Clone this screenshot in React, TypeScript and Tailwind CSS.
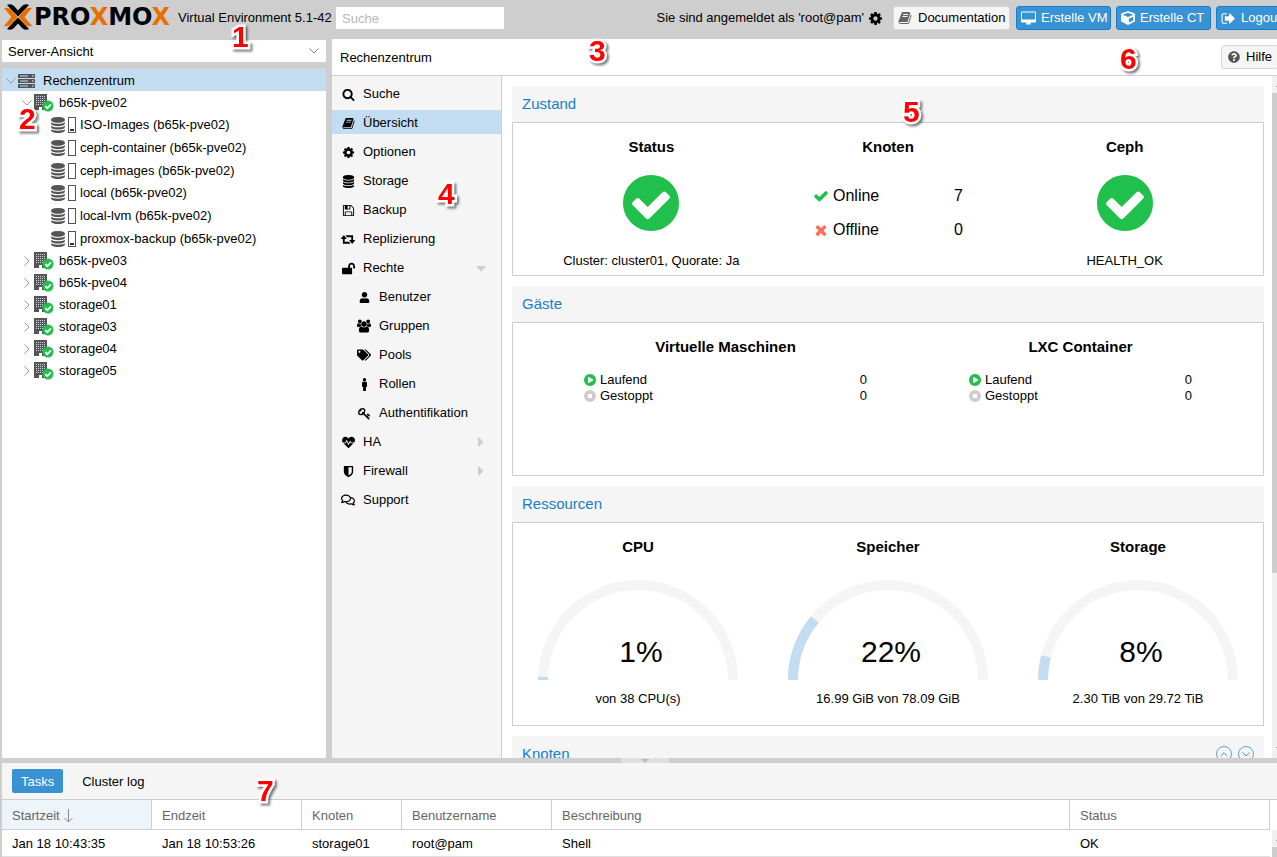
import type { ReactNode } from "react";
import {
  FaCaretDown,
  FaCaretRight,
  FaCube,
  FaHeartbeat,
  FaLockOpen,
  FaMale,
  FaQuestionCircle,
  FaRegComments,
  FaTags,
  FaUser,
} from "react-icons/fa";

const glyphs = {
  search:
    "M1216 832q0-185-131.5-316.5t-316.5-131.5-316.5 131.5-131.5 316.5 131.5 316.5 316.5 131.5 316.5-131.5 131.5-316.5zm512 832q0 52-38 90t-90 38q-54 0-90-38l-343-342q-179 124-399 124-143 0-273.5-55.5t-225-150-150-225-55.5-273.5 55.5-273.5 150-225 225-150 273.5-55.5 273.5 55.5 225 150 150 225 55.5 273.5q0 220-124 399l343 343q37 37 37 90z",
  book: "M1703 478q40 57 18 129l-275 906q-19 64-76.5 107.5t-122.5 43.5h-923q-77 0-148.5-53.5t-99.5-131.5q-24-67-2-127 0-4 3-27t4-37q1-8-3-21.5t-3-19.5q2-11 8-21t16.5-23.5 16.5-23.5q23-38 45-91.5t30-91.5q3-10 .5-30t-.5-28q3-11 17-28t17-23q21-36 42-92t25-90q1-9-2.5-32t.5-28q4-13 22-30.5t22-22.5q19-26 42.5-84.5t27.5-96.5q1-8-3-25.5t-2-26.5q2-8 9-18t18-23 17-21q8-12 16.5-30.5t15-35 16-36 19.5-32 26.5-23.5 36-11.5 47.5 5.5l-1 3q38-9 51-9h761q74 0 114 56t18 130l-274 906q-36 119-71.5 153.5t-128.5 34.5h-869q-27 0-38 15-11 16-1 43 24 70 144 70h923q29 0 56-15.5t35-41.5l300-987q7-22 5-57 38 15 59 43zm-1064 2q-4 13 2 22.5t20 9.5h608q13 0 25.5-9.5t16.5-22.5l21-64q4-13-2-22.5t-20-9.5h-608q-13 0-25.5 9.5t-16.5 22.5zm-83 256q-4 13 2 22.5t20 9.5h608q13 0 25.5-9.5t16.5-22.5l21-64q4-13-2-22.5t-20-9.5h-608q-13 0-25.5 9.5t-16.5 22.5z",
  cog: "M1152 896q0-106-75-181t-181-75-181 75-75 181 75 181 181 75 181-75 75-181zm512-109v222q0 12-8 23t-20 13l-185 28q-19 54-39 91 35 50 107 138 10 12 10 25t-9 23q-27 37-99 108t-94 71q-12 0-26-9l-138-108q-44 23-91 38-16 136-29 186-7 28-36 28h-222q-14 0-24.5-8.5t-11.5-21.5l-28-184q-49-16-90-37l-141 107q-10 9-25 9-14 0-25-11-126-114-165-168-7-10-7-23 0-12 8-23 15-21 51-66.5t54-70.5q-27-50-41-99l-183-27q-13-2-21-12.5t-8-23.5v-222q0-12 8-23t19-13l186-28q14-46 39-92-40-57-107-138-10-12-10-24 0-10 9-23 26-36 98.5-107.5t94.5-71.5q13 0 26 10l138 107q44-23 91-38 16-136 29-186 7-28 36-28h222q14 0 24.5 8.5t11.5 21.5l28 184q49 16 90 37l142-107q9-9 24-9 13 0 25 10 129 119 165 170 7 8 7 22 0 12-8 23-15 21-51 66.5t-54 70.5q26 50 41 98l183 28q13 2 21 12.5t8 23.5z",
  database:
    "M896 768q237 0 443-43t325-127v170q0 69-103 128t-280 93.5-385 34.5-385-34.5-280-93.5-103-128v-170q119 84 325 127t443 43zm0 768q237 0 443-43t325-127v170q0 69-103 128t-280 93.5-385 34.5-385-34.5-280-93.5-103-128v-170q119 84 325 127t443 43zm0-384q237 0 443-43t325-127v170q0 69-103 128t-280 93.5-385 34.5-385-34.5-280-93.5-103-128v-170q119 84 325 127t443 43zm0-1152q208 0 385 34.5t280 93.5 103 128v128q0 69-103 128t-280 93.5-385 34.5-385-34.5-280-93.5-103-128v-128q0-69 103-128t280-93.5 385-34.5z",
  floppy:
    "M512 1536h768v-384h-768v384zm896 0h128v-896q0-14-10-38.5t-20-34.5l-281-281q-10-10-34-20t-39-10v416q0 40-28 68t-68 28h-576q-40 0-68-28t-28-68v-416h-128v1280h128v-416q0-40 28-68t68-28h832q40 0 68 28t28 68v416zm-384-928v-320q0-13-9.5-22.5t-22.5-9.5h-192q-13 0-22.5 9.5t-9.5 22.5v320q0 13 9.5 22.5t22.5 9.5h192q13 0 22.5-9.5t9.5-22.5zm640 32v928q0 40-28 68t-68 28h-1344q-40 0-68-28t-28-68v-1344q0-40 28-68t68-28h928q40 0 88 20t76 48l280 280q28 28 48 76t20 88z",
  retweet:
    "M1280 1632q0 13-9.5 22.5t-22.5 9.5h-960q-8 0-13.5-2t-9-7-5.5-8-3-11.5-1-11.5v-600h-192q-26 0-45-19t-19-45q0-24 15-41l320-384q19-22 49-22t49 22l320 384q15 17 15 41 0 26-19 45t-45 19h-192v384h576q16 0 25 11l160 192q7 10 7 21zm640-416q0 24-15 41l-320 384q-20 23-49 23t-49-23l-320-384q-15-17-15-41 0-26 19-45t45-19h192v-384h-576q-16 0-25-12l-160-192q-7-9-7-20 0-13 9.5-22.5t22.5-9.5h960q8 0 13.5 2t9 7 5.5 8 3 11.5 1 11.5v600h192q26 0 45 19t19 45z",
  users:
    "M529 896q-162 5-265 128h-134q-82 0-138-40.5t-56-118.5q0-353 124-353 6 0 43.5 21t97.5 42.5 119 21.5q67 0 133-23-5 37-5 66 0 139 81 256zm1071 637q0 120-73 189.5t-194 69.5h-874q-121 0-194-69.5t-73-189.5q0-53 3.5-103.5t14-109 26.5-108.5 43-97.5 62-81 85.5-53.5 111.5-20q10 0 43 21.5t73 48 107 48 135 21.5 135-21.5 107-48 73-48 43-21.5q61 0 111.5 20t85.5 53.5 62 81 43 97.5 26.5 108.5 14 109 3.5 103.5zm-1024-1277q0 106-75 181t-181 75-181-75-75-181 75-181 181-75 181 75 75 181zm704 384q0 159-112.5 271.5t-271.5 112.5-271.5-112.5-112.5-271.5 112.5-271.5 271.5-112.5 271.5 112.5 112.5 271.5zm576 225q0 78-56 118.5t-138 40.5h-134q-103-123-265-128 81-117 81-256 0-29-5-66 66 23 133 23 59 0 119-21.5t97.5-42.5 43.5-21q124 0 124 353zm-128-609q0 106-75 181t-181 75-181-75-75-181 75-181 181-75 181 75 75 181z",
  key: "M832 512q0-80-56-136t-136-56-136 56-56 136q0 42 19 83-41-19-83-19-80 0-136 56t-56 136 56 136 136 56 136-56 56-136q0-42-19-83 41 19 83 19 80 0 136-56t56-136zm851 704q0 17-49 66t-66 49q-9 0-28.5-16t-36.5-33-38.5-40-24.5-26l-96 96 220 220q28 28 28 68 0 42-39 81t-81 39q-40 0-68-28l-671-671q-176 131-365 131-163 0-265.5-102.5t-102.5-265.5q0-160 95-313t248-248 313-95q163 0 265.5 102.5t102.5 265.5q0 189-131 365l355 355 96-96q-3-3-26-24.5t-40-38.5-33-36.5-16-28.5q0-17 49-66t66-49q13 0 23 10 6 6 46 44.5t82 79.5 86.5 86 73 78 28.5 41z",
  shield:
    "M1344 960v-640h-448v1137q119-63 213-137 235-184 235-360zm192-768v768q0 86-33.5 170.5t-83 150-118 127.5-126.5 103-121 77.5-89.5 49.5-42.5 20q-12 6-26 6t-26-6q-16-7-42.5-20t-89.5-49.5-121-77.5-126.5-103-118-127.5-83-150-33.5-170.5v-768q0-26 19-45t45-19h1152q26 0 45 19t19 45z",
  desktop:
    "M1728 992v-832q0-13-9.5-22.5t-22.5-9.5h-1600q-13 0-22.5 9.5t-9.5 22.5v832q0 13 9.5 22.5t22.5 9.5h1600q13 0 22.5-9.5t9.5-22.5zm128-832v1088q0 66-47 113t-113 47h-544q0 37 16 77.5t32 71 16 43.5q0 26-19 45t-45 19h-512q-26 0-45-19t-19-45q0-14 16-44t32-70 16-78h-544q-66 0-113-47t-47-113v-1088q0-66 47-113t113-47h1600q66 0 113 47t47 113z",
  signOut:
    "M704 1440q0 4 1 20t.5 26.5-3 23.5-10 19.5-20.5 6.5h-320q-119 0-203.5-84.5t-84.5-203.5v-704q0-119 84.5-203.5t203.5-84.5h320q13 0 22.5 9.5t9.5 22.5q0 4 1 20t.5 26.5-3 23.5-10 19.5-20.5 6.5h-320q-66 0-113 47t-47 113v704q0 66 47 113t113 47h312l11.5 1 11.5 3 8 5.5 7 9 2 13.5zm928-544q0 26-19 45l-544 544q-19 19-45 19t-45-19-19-45v-288h-448q-26 0-45-19t-19-45v-384q0-26 19-45t45-19h448v-288q0-26 19-45t45-19 45 19l544 544q19 19 19 45z",
  checkCircle:
    "M1412 734q0-28-18-46l-91-90q-19-19-45-19t-45 19l-408 407-226-226q-19-19-45-19t-45 19l-91 90q-18 18-18 46 0 27 18 45l362 362q19 19 45 19 27 0 46-19l543-543q18-18 18-45zm252 162q0 209-103 385.5t-279.5 279.5-385.5 103-385.5-103-279.5-279.5-103-385.5 103-385.5 279.5-279.5 385.5-103 385.5 103 279.5 279.5 103 385.5z",
  check:
    "M1671 566q0 40-28 68l-724 724-136 136q-28 28-68 28t-68-28l-136-136-362-362q-28-28-28-68t28-68l136-136q28-28 68-28t68 28l294 295 656-657q28-28 68-28t68 28l136 136q28 28 28 68z",
  times:
    "M1490 1322q0 40-28 68l-136 136q-28 28-68 28t-68-28l-294-294-294 294q-28 28-68 28t-68-28l-136-136q-28-28-28-68t28-68l294-294-294-294q-28-28-28-68t28-68l136-136q28-28 68-28t68 28l294 294 294-294q28-28 68-28t68 28l136 136q28 28 28 68t-28 68l-294 294 294 294q28 28 28 68z",
  playCircle:
    "M896 128q209 0 385.5 103t279.5 279.5 103 385.5-103 385.5-279.5 279.5-385.5 103-385.5-103-279.5-279.5-103-385.5 103-385.5 279.5-279.5 385.5-103zm384 823q32-18 32-55t-32-55l-544-320q-31-19-64-1-32 19-32 56v640q0 37 32 56 16 8 32 8 17 0 32-9z",
};

function Glyph({
  name,
  className,
  viewBox = "0 0 1792 1792",
}: {
  name: keyof typeof glyphs;
  className?: string;
  viewBox?: string;
}) {
  return (
    <svg viewBox={viewBox} fill="currentColor" className={`shrink-0 ${className ?? ""}`} aria-hidden="true">
      <path d={glyphs[name]} />
    </svg>
  );
}

function Chevron({ className }: { className?: string }) {
  return (
    <svg viewBox="0 0 10 6" fill="none" stroke="currentColor" className={`shrink-0 ${className ?? ""}`} aria-hidden="true">
      <path d="M.5.5 5 5 9.5.5" />
    </svg>
  );
}

function ServerIcon() {
  return (
    <svg viewBox="0 0 17 14" className="h-[14px] w-[17px] shrink-0" aria-hidden="true">
      {[0, 5, 10].map((y) => (
        <g key={y}>
          <rect x="0" y={y} width="17" height="4" rx=".5" fill="#555" />
          <rect x="2" y={y + 1.5} width="8" height="1" fill="#c2ddf2" />
          <rect x="14" y={y + 1.5} width="1.5" height="1" fill="#fff" />
        </g>
      ))}
    </svg>
  );
}

function BuildingIcon() {
  return (
    <svg viewBox="0 0 20 18" className="h-[18px] w-5 shrink-0" aria-hidden="true">
      <path d="M0 0h13v16H0z" fill="#555" />
      {[2, 4, 6, 8, 10].map((y) =>
        [2, 4, 6, 8, 10].map((x) => <rect key={`${x}-${y}`} x={x} y={y} width="1" height="1" fill="#cfd6de" />),
      )}
      <path d="M5 13h3v3H5z" fill="#fff" />
      <circle cx="14" cy="12" r="5.5" fill="#21bf4b" />
      <path d="m11.3 12.2 2 2 3.6-3.8" fill="none" stroke="#fff" strokeWidth="1.7" />
    </svg>
  );
}

function Logo() {
  return (
    <div className="flex w-[170px] shrink-0 items-center gap-[2px]">
      <svg viewBox="0 0 28 26" className="h-[26px] w-7 shrink-0" aria-hidden="true">
        <path d="M3 1q4-2 7 1l4 4.500 4-4.500q3-3 7-1L14 12.500zM3 25q4 2 7-1l4-4.500 4 4.500q3 3 7 1L14 13.500z" fill="#000" />
        <path d="M0 4q5-1 7 1.500l6.500 7.500L7 20.500Q5 23 0 22l7.500-9zM28 4q-5-1-7 1.500L14.500 13l6.500 7.500q2 2.500 7 1.500l-7.500-9z" fill="#e57000" />
      </svg>
      <span className="font-['DejaVu_Sans',sans-serif] text-[24px] leading-7 font-bold text-black">
        PRO<span className="text-[#e57000]">X</span>MO<span className="text-[#e57000]">X</span>
      </span>
    </div>
  );
}

const storages = [
  { name: "ISO-Images (b65k-pve02)", used: true },
  { name: "ceph-container (b65k-pve02)", used: false },
  { name: "ceph-images (b65k-pve02)", used: false },
  { name: "local (b65k-pve02)", used: false },
  { name: "local-lvm (b65k-pve02)", used: false },
  { name: "proxmox-backup (b65k-pve02)", used: true },
];

const nodes = ["b65k-pve03", "b65k-pve04", "storage01", "storage03", "storage04", "storage05"];

const navItems: { label: string; icon: ReactNode; sub?: boolean; active?: boolean; arrow?: "down" | "right" }[] = [
  { label: "Suche", icon: <Glyph name="search" className="size-[13px]" /> },
  { label: "Übersicht", icon: <Glyph name="book" className="size-[13px]" />, active: true },
  { label: "Optionen", icon: <Glyph name="cog" className="size-[13px]" /> },
  { label: "Storage", icon: <Glyph name="database" className="size-[13px]" /> },
  { label: "Backup", icon: <Glyph name="floppy" className="size-[13px]" /> },
  { label: "Replizierung", icon: <Glyph name="retweet" viewBox="0 128 1920 1792" className="size-[14px]" /> },
  { label: "Rechte", icon: <FaLockOpen className="size-[13px]" />, arrow: "down" },
  { label: "Benutzer", icon: <FaUser className="size-[11px]" />, sub: true },
  { label: "Gruppen", icon: <Glyph name="users" viewBox="-64 0 1920 1792" className="size-[14px]" />, sub: true },
  { label: "Pools", icon: <FaTags className="size-[14px]" />, sub: true },
  { label: "Rollen", icon: <FaMale className="size-[13px]" />, sub: true },
  { label: "Authentifikation", icon: <Glyph name="key" className="size-[13px]" />, sub: true },
  { label: "HA", icon: <FaHeartbeat className="size-[13px]" />, arrow: "right" },
  { label: "Firewall", icon: <Glyph name="shield" className="size-[13px]" />, arrow: "right" },
  { label: "Support", icon: <FaRegComments className="size-[14px]" /> },
];

const gauges = [
  { title: "CPU", value: 1, detail: "von 38 CPU(s)" },
  { title: "Speicher", value: 22, detail: "16.99 GiB von 78.09 GiB" },
  { title: "Storage", value: 8, detail: "2.30 TiB von 29.72 TiB" },
];

function Header() {
  const primary =
    "flex h-6 shrink-0 items-center gap-[5px] rounded-[3px] border border-[#157fcc] bg-[#3892d4] pl-1 text-white";
  return (
    <header className="flex h-[39px] items-start pt-[6px] pr-[5px] pl-1 whitespace-nowrap">
      <div className="-mt-[3px] flex">
        <Logo />
      </div>
      <span className="ml-1 w-[158px] shrink-0 leading-6">Virtual Environment 5.1-42</span>
      <input
        aria-label="Suche"
        placeholder="Suche"
        className="mt-px h-[22px] w-[168px] shrink-0 bg-white px-[6px] outline-none placeholder:text-[#b8b8b8]"
      />
      <div className="ml-auto flex shrink-0 items-center">
        <span>Sie sind angemeldet als 'root@pam'</span>
        <button aria-label="Einstellungen" className="mr-[10px] ml-1">
          <Glyph name="cog" className="size-[15px]" />
        </button>
        <button className="mr-[6px] flex h-6 w-[117px] items-center gap-[6px] rounded-[3px] border border-[#d8d8d8] bg-[#f5f5f5] pl-1">
          <Glyph name="book" className="size-[14px] text-[#666]" />
          Documentation
        </button>
        <div className="flex gap-[5px]">
          <button className={`${primary} w-[95px]`}>
            <Glyph name="desktop" viewBox="-64 0 1920 1792" className="size-[15px]" />
            Erstelle VM
          </button>
          <button className={`${primary} w-[95px]`}>
            <FaCube className="size-[14px]" />
            Erstelle CT
          </button>
          <button className={`${primary} w-[68px]`}>
            <Glyph name="signOut" className="size-[15px]" />
            Logout
          </button>
        </div>
      </div>
    </header>
  );
}

function ResourceTree() {
  return (
    <aside className="flex w-[324px] shrink-0 flex-col gap-[7px] pt-px">
      <div className="relative">
        <select aria-label="Ansicht" className="h-[22px] w-full appearance-none bg-white pt-[2px] pl-[6px] outline-none">
          <option>Server-Ansicht</option>
        </select>
        <Chevron className="pointer-events-none absolute top-2 right-[7px] h-[6px] w-[10px] text-[#888]" />
      </div>
      <div className="flex-1 bg-white">
        <div className="flex h-[22px] items-center bg-[#c2ddf2] pt-[2px] pl-1">
          <Chevron className="mr-[2px] h-[6px] w-[10px] text-[#999]" />
          <ServerIcon />
          <span className="ml-2">Rechenzentrum</span>
        </div>
        <div className="flex h-[22px] items-center pt-[2px] pl-[20px]">
          <Chevron className="mr-[2px] h-[6px] w-[10px] text-[#999]" />
          <BuildingIcon />
          <span className="ml-[5px]">b65k-pve02</span>
        </div>
        <ul className="grid h-[136px] auto-rows-fr">
          {storages.map((storage) => (
            <li key={storage.name} className="flex items-center pt-[2px] pl-[46px]">
              <Glyph name="database" className="size-5 px-px py-[2px] text-[#555]" />
              <span className="flex h-4 w-2 items-end border border-[#555] p-px">
                {storage.used && <span className="h-[2px] w-full bg-[#333]" />}
              </span>
              <span className="ml-1">{storage.name}</span>
            </li>
          ))}
        </ul>
        <ul>
          {nodes.map((node) => (
            <li key={node} className="flex h-[22px] items-center pt-[2px] pl-[20px]">
              <Chevron className="mr-[2px] h-[6px] w-[10px] -rotate-90 text-[#999]" />
              <BuildingIcon />
              <span className="ml-[5px]">{node}</span>
            </li>
          ))}
        </ul>
      </div>
    </aside>
  );
}

function SideNav() {
  return (
    <nav className="flex w-[170px] shrink-0 flex-col gap-[5px] border-r border-[#cecece] bg-[#f5f5f5] pt-[5px]">
      {navItems.map((item) => (
        <a
          key={item.label}
          href="#"
          className={`flex h-6 items-center pt-[2px] pr-3 ${item.sub ? "pl-6" : "pl-2"} ${item.active ? "bg-[#c2ddf2]" : ""}`}
        >
          <span className="mr-[7px] flex w-4 justify-center">{item.icon}</span>
          {item.label}
          {item.arrow === "down" && <FaCaretDown className="ml-auto size-4 text-[#cecece]" />}
          {item.arrow === "right" && <FaCaretRight className="ml-auto size-4 text-[#cecece]" />}
        </a>
      ))}
    </nav>
  );
}

function Panel({ title, children }: { title: string; children: ReactNode }) {
  return (
    <section>
      <h2 className="flex h-9 items-center bg-[#f5f5f5] px-[10px] text-[15px] text-[#157fcc]">{title}</h2>
      <div className="border border-[#cecece] bg-white pt-[14px]">{children}</div>
    </section>
  );
}

function Title({ children }: { children: ReactNode }) {
  return <h3 className="text-center text-[15px] leading-5 font-bold">{children}</h3>;
}

function StatusColumn({ title, text }: { title: string; text: string }) {
  return (
    <div className="flex flex-col items-center">
      <Title>{title}</Title>
      <Glyph name="checkCircle" viewBox="128 128 1536 1536" className="mt-[18px] size-14 text-[#21bf4b]" />
      <p className="mt-[22px] leading-4">{text}</p>
    </div>
  );
}

function GuestColumn({ title }: { title: string }) {
  return (
    <div className="px-[51px]">
      <Title>{title}</Title>
      <ul className="mt-[15px] leading-4">
        <li className="flex items-center">
          <Glyph name="playCircle" viewBox="128 128 1536 1536" className="mr-1 size-3 text-[#21bf4b]" />
          Laufend<span className="ml-auto">0</span>
        </li>
        <li className="flex items-center">
          <svg viewBox="0 0 12 12" className="mr-1 size-3" aria-hidden="true">
            <circle cx="6" cy="6" r="6" fill="#cecece" />
            <rect x="4" y="4" width="4" height="4" fill="#fff" />
          </svg>
          Gestoppt<span className="ml-auto">0</span>
        </li>
      </ul>
    </div>
  );
}

function Gauge({ value }: { value: number }) {
  const angle = Math.PI * (1 - value / 100);
  const x = 100 + 95 * Math.cos(angle);
  const y = 100 - 95 * Math.sin(angle);
  return (
    <div className="relative mt-[23px] h-[100px] w-[200px]">
      <svg viewBox="0 0 200 100" className="h-full w-full" fill="none" strokeWidth="10" aria-hidden="true">
        <path d="M5 100A95 95 0 0 1 195 100" stroke="#f5f5f5" />
        <path d={`M5 100A95 95 0 0 1 ${x} ${y}`} stroke="#c2ddf2" />
      </svg>
      <span className="absolute inset-x-0 bottom-3 pl-[6px] text-center text-[30px] leading-8">{value}%</span>
    </div>
  );
}

function Overview() {
  return (
    <div className="flex min-w-0 flex-1 flex-col gap-[10px] overflow-hidden bg-white pt-[10px] pr-2 pl-[10px]">
      <Panel title="Zustand">
        <div className="grid grid-cols-3 px-5 pb-[6px]">
          <StatusColumn title="Status" text="Cluster: cluster01, Quorate: Ja" />
          <div className="flex flex-col items-center">
            <Title>Knoten</Title>
            <ul className="mt-[22px] w-[150px] text-base">
              <li className="flex h-[34px] items-center">
                <Glyph name="check" className="mr-1 size-4 text-[#21bf4b]" />
                Online<span className="ml-auto">7</span>
              </li>
              <li className="flex h-[34px] items-center">
                <Glyph name="times" className="mr-1 size-4 text-[#ff6c59]" />
                Offline<span className="ml-auto">0</span>
              </li>
            </ul>
          </div>
          <StatusColumn title="Ceph" text="HEALTH_OK" />
        </div>
      </Panel>
      <Panel title="Gäste">
        <div className="grid grid-cols-[385fr_325fr] px-5 pb-[71px]">
          <GuestColumn title="Virtuelle Maschinen" />
          <GuestColumn title="LXC Container" />
        </div>
      </Panel>
      <Panel title="Ressourcen">
        <div className="grid grid-cols-3 pb-[18px]">
          {gauges.map((gauge) => (
            <div key={gauge.title} className="flex flex-col items-center">
              <Title>{gauge.title}</Title>
              <Gauge value={gauge.value} />
              <p className="mt-[11px] leading-4">{gauge.detail}</p>
            </div>
          ))}
        </div>
      </Panel>
      <section className="flex h-9 shrink-0 items-center gap-[6px] bg-[#f5f5f5] px-[10px] text-[#157fcc]">
        <h2 className="mr-auto text-[15px]">Knoten</h2>
        <button aria-label="Nach oben" className="flex size-4 items-center justify-center rounded-full border border-[#5ba4d9]">
          <Chevron className="w-2 rotate-180" />
        </button>
        <button aria-label="Nach unten" className="flex size-4 items-center justify-center rounded-full border border-[#5ba4d9]">
          <Chevron className="w-2" />
        </button>
      </section>
    </div>
  );
}

function Scrollbar() {
  return (
    <div className="flex w-[17px] shrink-0 flex-col bg-[#f0f0f0]" aria-hidden="true">
      <div className="flex h-[17px] items-center justify-center text-[#505050]">
        <Chevron className="w-[9px] rotate-180" />
      </div>
      <div className="flex-1">
        <div className="h-[74%] bg-[#cdcdcd]" />
      </div>
      <div className="flex h-[17px] items-center justify-center text-[#505050]">
        <Chevron className="w-[9px]" />
      </div>
    </div>
  );
}

function TaskLog() {
  const th = "border-r border-b border-[#cecece] px-[10px] pt-[2px] text-left font-normal text-[#666]";
  const td = "border-b border-[#e0e0e0] px-[10px] pt-[2px]";
  return (
    <section className="ml-px border-l border-[#cecece] bg-[#f5f5f5]">
      <div role="tablist" className="flex h-9 items-center gap-[10px] px-[10px]">
        <button role="tab" aria-selected="true" className="h-6 rounded-[2px] bg-[#3892d4] px-[9px] pt-px text-white">
          Tasks
        </button>
        <button role="tab" aria-selected="false" className="h-6 px-[9px] pt-px">
          Cluster log
        </button>
      </div>
      <div className="flex border-t border-[#cecece] bg-white">
        <table className="min-w-0 flex-1 table-fixed border-separate border-spacing-0">
          <thead>
            <tr className="h-[30px]">
              <th className={`${th} w-[150px] bg-[#edf5fb]`}>
                <span className="flex items-center gap-1">
                  Startzeit
                  <svg viewBox="0 0 9 14" fill="none" stroke="#888" className="h-[14px] w-[9px]" aria-hidden="true">
                    <path d="M4.500 0v13M.5 9l4 4 4-4" />
                  </svg>
                </span>
              </th>
              <th className={`${th} w-[150px]`}>Endzeit</th>
              <th className={`${th} w-[100px]`}>Knoten</th>
              <th className={`${th} w-[150px]`}>Benutzername</th>
              <th className={th}>Beschreibung</th>
              <th className={`${th} w-[200px]`}>Status</th>
            </tr>
          </thead>
          <tbody>
            <tr className="h-[27px]">
              <td className={td}>Jan 18 10:43:35</td>
              <td className={td}>Jan 18 10:53:26</td>
              <td className={td}>storage01</td>
              <td className={td}>root@pam</td>
              <td className={td}>Shell</td>
              <td className={td}>OK</td>
            </tr>
          </tbody>
        </table>
        <div className="w-[19px] shrink-0 pt-[30px] pl-[2px]" aria-hidden="true">
          <div className="flex h-[17px] items-center justify-center bg-[#f0f0f0] text-[#505050]">
            <Chevron className="w-[9px] rotate-180" />
          </div>
          <div className="h-[10px] bg-[#cdcdcd]" />
        </div>
      </div>
    </section>
  );
}

const markers = [
  { n: 1, pos: "left-[232px] top-[19px]" },
  { n: 2, pos: "left-[19px] top-[101px]" },
  { n: 3, pos: "left-[589px] top-[33px]" },
  { n: 4, pos: "left-[438px] top-[176px]" },
  { n: 5, pos: "left-[903px] top-[94px]" },
  { n: 6, pos: "left-[1120px] top-[41px]" },
  { n: 7, pos: "left-[257px] top-[773px]" },
];

export default function App() {
  return (
    <div className="relative h-screen overflow-hidden bg-[#cecece] font-['Liberation_Sans',Arial,sans-serif] text-[13px] leading-4 text-black">
      <div className="-mr-3 flex h-full flex-col">
        <Header />
        <div className="flex min-h-0 flex-1 gap-[6px] pl-[2px]">
          <ResourceTree />
          <main className="flex min-w-0 flex-1 flex-col">
            <div className="flex h-[37px] shrink-0 items-center justify-between border-b border-[#cecece] bg-white pr-[10px] pl-2">
              <h1 className="pt-px">Rechenzentrum</h1>
              <button className="flex h-6 w-[58px] items-center gap-[6px] rounded-[3px] border border-[#d8d8d8] bg-[#f5f5f5] pl-[6px]">
                <FaQuestionCircle className="size-3 text-[#555]" />
                Hilfe
              </button>
            </div>
            <div className="flex min-h-0 flex-1">
              <SideNav />
              <Overview />
              <Scrollbar />
            </div>
          </main>
        </div>
        <div className="flex h-[5px] shrink-0 justify-center">
          <div className="flex w-12 items-center justify-center bg-[#e0e0e0]">
            <svg viewBox="0 0 8 4" className="h-1 w-2" aria-hidden="true">
              <path d="M0 0h8L4 4z" fill="#bbb" />
            </svg>
          </div>
        </div>
        <TaskLog />
      </div>
      {markers.map((marker) => (
        <span
          key={marker.n}
          className={`pointer-events-none absolute text-[30px] leading-9 font-bold text-[#f00] drop-shadow-[2px_2px_1px_rgba(0,0,0,0.5)] [-webkit-text-stroke:5px_white] [paint-order:stroke_fill] ${marker.pos}`}
        >
          {marker.n}
        </span>
      ))}
    </div>
  );
}
